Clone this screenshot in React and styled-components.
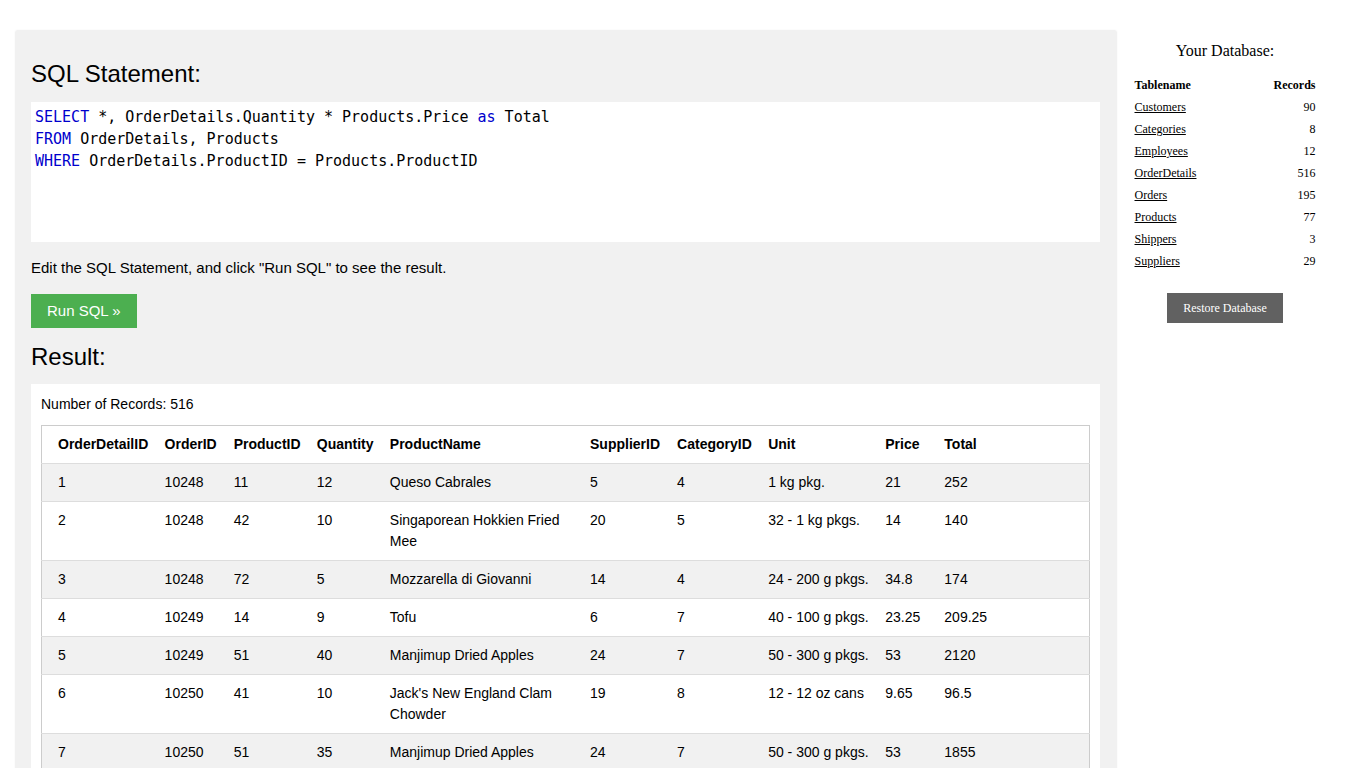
import styled, { createGlobalStyle } from "styled-components";

const GlobalStyle = createGlobalStyle`
  html, body {
    margin: 0;
    padding: 0;
    background: #fff;
  }
  html {
    overflow-y: scroll;
  }
  body {
    font-family: "Liberation Sans", Arial, sans-serif;
    color: #000;
  }
  ::-webkit-scrollbar {
    width: 15px;
    background: #f1f1f1;
  }
  ::-webkit-scrollbar-track {
    background: #f1f1f1;
  }
  ::-webkit-scrollbar-thumb {
    background: #c1c1c1;
    border: 2px solid #f1f1f1;
  }
  ::-webkit-scrollbar-button:single-button:vertical:decrement {
    display: block;
    height: 15px;
    background-color: #f1f1f1;
    background-image:
      linear-gradient(to top left, #505050 50%, transparent 50%),
      linear-gradient(to top right, #505050 50%, transparent 50%);
    background-size: 4px 4px;
    background-repeat: no-repeat;
    background-position: 4px 5px, 8px 5px;
  }
  ::-webkit-scrollbar-button:single-button:vertical:increment {
    display: block;
    height: 15px;
    background-color: #f1f1f1;
    background-image:
      linear-gradient(to bottom left, #505050 50%, transparent 50%),
      linear-gradient(to bottom right, #505050 50%, transparent 50%);
    background-size: 4px 4px;
    background-repeat: no-repeat;
    background-position: 4px 6px, 8px 6px;
  }
`;

const Page = styled.div`
  display: flex;
  align-items: flex-start;
  padding: 31px 0 40px 16px;
`;

const EditorPanel = styled.div`
  flex: 0 0 1100px;
  box-sizing: border-box;
  padding: 29px 16px 20px 15px;
  background: #f1f1f1;
  box-shadow: 0 0 2px rgba(0, 0, 0, 0.18);
`;

const Heading = styled.h3`
  margin: 0 0 14px;
  font-size: 24px;
  font-weight: normal;
  line-height: 28px;
`;

const CodeBox = styled.pre`
  box-sizing: border-box;
  height: 140px;
  margin: 0;
  padding: 4px 4px;
  background: #fff;
  font-family: "DejaVu Sans Mono", monospace;
  font-size: 15px;
  line-height: 22px;
  color: #000;
`;

const Keyword = styled.span`
  color: mediumblue;
`;

const Hint = styled.p`
  margin: 15px 0 15px;
  font-size: 15px;
  line-height: 22px;
`;

const RunButton = styled.button`
  display: block;
  border: none;
  background: #4caf50;
  color: #fff;
  font-family: "Liberation Sans", Arial, sans-serif;
  font-size: 15px;
  line-height: 18px;
  padding: 8px 16px;
  cursor: pointer;
`;

const ResultHeading = styled(Heading)`
  margin: 15px 0 13px;
`;

const ResultBox = styled.div`
  background: #fff;
  padding: 10px;
  font-size: 14px;
  line-height: 21px;
`;

const Count = styled.div`
  margin-bottom: 10px;
`;

const Table = styled.table`
  width: 100%;
  table-layout: fixed;
  border-collapse: collapse;
  border: 1px solid #ccc;
`;

const Row = styled.tr`
  background: ${(p) => (p.$shaded ? "#f1f1f1" : "#fff")};
  border-bottom: 1px solid #ddd;
`;

const Th = styled.th`
  text-align: left;
  vertical-align: top;
  padding: 8px;
  font-weight: bold;
  &:first-child {
    padding-left: 16px;
  }
`;

const Td = styled.td`
  text-align: left;
  vertical-align: top;
  padding: 8px;
  &:first-child {
    padding-left: 16px;
  }
`;

const Sidebar = styled.div`
  flex: 0 0 218px;
  padding-top: 11px;
  font-family: "Liberation Serif", "Times New Roman", serif;
  text-align: center;
`;

const SideTitle = styled.div`
  font-size: 16px;
  line-height: 18px;
  margin-bottom: 14px;
`;

const DbTable = styled.table`
  width: 181px;
  margin: 0 auto;
  border-collapse: collapse;
  font-size: 12px;
  line-height: 14px;
  text-align: left;

  th,
  td {
    padding: 4px 0;
  }
  th:last-child,
  td:last-child {
    text-align: right;
  }
`;

const DbLink = styled.a`
  color: #000;
  text-decoration: underline;
  cursor: pointer;
`;

const RestoreButton = styled.button`
  margin-top: 21px;
  border: none;
  background: #616161;
  color: #fff;
  font-family: "Liberation Serif", "Times New Roman", serif;
  font-size: 12px;
  line-height: 14px;
  padding: 8px 16px;
  cursor: pointer;
`;

const columns = [
  ["OrderDetailID", 115],
  ["OrderID", 69],
  ["ProductID", 83],
  ["Quantity", 73],
  ["ProductName", 200],
  ["SupplierID", 87],
  ["CategoryID", 91],
  ["Unit", 117],
  ["Price", 59],
  ["Total", 153],
];

const rows = [
  [1, 10248, 11, 12, "Queso Cabrales", 5, 4, "1 kg pkg.", 21, 252],
  [2, 10248, 42, 10, "Singaporean Hokkien Fried Mee", 20, 5, "32 - 1 kg pkgs.", 14, 140],
  [3, 10248, 72, 5, "Mozzarella di Giovanni", 14, 4, "24 - 200 g pkgs.", 34.8, 174],
  [4, 10249, 14, 9, "Tofu", 6, 7, "40 - 100 g pkgs.", 23.25, 209.25],
  [5, 10249, 51, 40, "Manjimup Dried Apples", 24, 7, "50 - 300 g pkgs.", 53, 2120],
  [6, 10250, 41, 10, "Jack's New England Clam Chowder", 19, 8, "12 - 12 oz cans", 9.65, 96.5],
  [7, 10250, 51, 35, "Manjimup Dried Apples", 24, 7, "50 - 300 g pkgs.", 53, 1855],
  [8, 10250, 65, 15, "Louisiana Fiery Hot Pepper Sauce", 2, 2, "32 - 8 oz bottles", 21.05, 315.75],
  [9, 10251, 22, 6, "Gustaf's Knäckebröd", 9, 5, "24 - 500 g pkgs.", 21, 126],
  [10, 10251, 57, 15, "Ravioli Angelo", 26, 5, "24 - 250 g pkgs.", 19.5, 292.5],
  [11, 10251, 65, 20, "Louisiana Fiery Hot Pepper Sauce", 2, 2, "32 - 8 oz bottles", 21.05, 421],
  [12, 10252, 20, 40, "Sir Rodney's Marmalade", 8, 3, "30 gift boxes", 81, 3240],
  [13, 10252, 33, 25, "Geitost", 15, 4, "500 g", 2.5, 62.5],
  [14, 10252, 60, 40, "Camembert Pierrot", 28, 4, "15 - 300 g rounds", 34, 1360],
  [15, 10253, 31, 20, "Gorgonzola Telino", 14, 4, "12 - 100 g pkgs", 12.5, 250],
  [16, 10253, 39, 42, "Chartreuse verte", 18, 1, "750 cc per bottle", 18, 756],
  [17, 10253, 49, 40, "Maxilaku", 23, 3, "24 - 50 g pkgs.", 20, 800],
  [18, 10254, 24, 15, "Guaraná Fantástica", 10, 1, "12 - 355 ml cans", 4.5, 67.5],
  [19, 10254, 55, 21, "Pâté chinois", 25, 6, "24 boxes x 2 pies", 24, 504],
  [20, 10254, 74, 21, "Longlife Tofu", 4, 7, "5 kg pkg.", 10, 210],
];

const tables = [
  ["Customers", 90],
  ["Categories", 8],
  ["Employees", 12],
  ["OrderDetails", 516],
  ["Orders", 195],
  ["Products", 77],
  ["Shippers", 3],
  ["Suppliers", 29],
];

const App = () => {
  return (
    <>
      <GlobalStyle />
      <Page>
        <EditorPanel>
          <Heading>SQL Statement:</Heading>
          <CodeBox>
            <Keyword>SELECT</Keyword> *, OrderDetails.Quantity * Products.Price{" "}
            <Keyword>as</Keyword> Total{"\n"}
            <Keyword>FROM</Keyword> OrderDetails, Products{"\n"}
            <Keyword>WHERE</Keyword> OrderDetails.ProductID = Products.ProductID
          </CodeBox>
          <Hint>Edit the SQL Statement, and click "Run SQL" to see the result.</Hint>
          <RunButton>Run SQL »</RunButton>
          <ResultHeading>Result:</ResultHeading>
          <ResultBox>
            <Count>Number of Records: 516</Count>
            <Table>
              <colgroup>
                {columns.map(([name, w]) => (
                  <col key={name} style={{ width: w }} />
                ))}
              </colgroup>
              <tbody>
                <Row>
                  {columns.map(([name]) => (
                    <Th key={name}>{name}</Th>
                  ))}
                </Row>
                {rows.map((r, i) => (
                  <Row key={r[0]} $shaded={i % 2 === 0}>
                    {r.map((v, j) => (
                      <Td key={j}>{v}</Td>
                    ))}
                  </Row>
                ))}
              </tbody>
            </Table>
          </ResultBox>
        </EditorPanel>
        <Sidebar>
          <SideTitle>Your Database:</SideTitle>
          <DbTable>
            <tbody>
              <tr>
                <th>Tablename</th>
                <th>Records</th>
              </tr>
              {tables.map(([name, n]) => (
                <tr key={name}>
                  <td>
                    <DbLink>{name}</DbLink>
                  </td>
                  <td>{n}</td>
                </tr>
              ))}
            </tbody>
          </DbTable>
          <RestoreButton>Restore Database</RestoreButton>
        </Sidebar>
      </Page>
    </>
  );
};

export default App;
